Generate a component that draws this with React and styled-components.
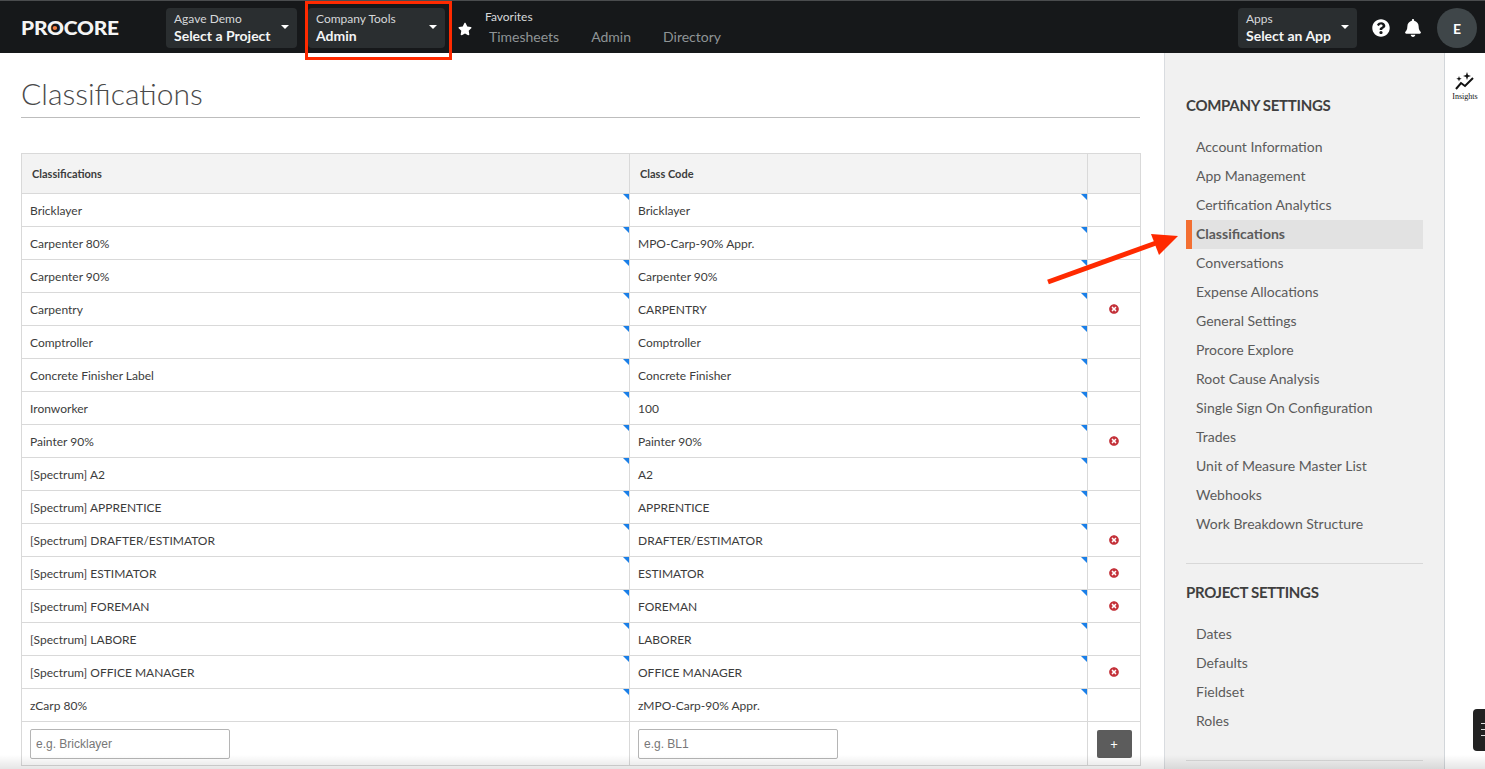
import React from "react";
import styled, { createGlobalStyle } from "styled-components";
import { FaBell, FaQuestionCircle, FaStar, FaTimesCircle } from "react-icons/fa";

const GlobalStyle = createGlobalStyle`
  html, body {
    margin: 0;
    height: 100%;
    overflow: hidden;
    background: #fff;
    font-family: Lato, "Liberation Sans", sans-serif;
  }
  * { box-sizing: border-box; }
`;

const Page = styled.div`
  position: relative;
  height: 769px;
  overflow: hidden;
  display: flex;
  flex-direction: column;
`;

const Header = styled.header`
  height: 53px;
  flex: none;
  display: flex;
  align-items: center;
  padding: 2px 8px 0 21px;
  background: #16181a;
  border-top: 1px solid #4a4c4e;
  color: #fff;
`;

const Logo = styled.div`
  width: 106px;
  margin-right: 39px;
  font-size: 18.5px;
  font-weight: 900;
  letter-spacing: -0.2px;
  line-height: 1;
  color: #f4f4f4;
  transform: scaleX(1.13);
  transform-origin: left center;
  white-space: nowrap;
`;

const LogoO = styled.span`
  position: relative;
  &::after {
    content: "";
    position: absolute;
    left: 50%;
    top: 50%;
    width: 4px;
    height: 4px;
    margin: -2px 0 0 -2px;
    border-radius: 50%;
    background: #f47e42;
  }
`;

const Picker = styled.div`
  position: relative;
  width: ${(p) => p.$width}px;
  height: 40px;
  margin-right: ${(p) => p.$gap || 0}px;
  padding: 3px 8px 0;
  border-radius: 4px;
  background: #2a2e30;
  flex: none;
  &::after {
    content: "";
    position: absolute;
    right: 8px;
    top: 17px;
    border-left: 4px solid transparent;
    border-right: 4px solid transparent;
    border-top: 4px solid #fff;
  }
`;

const PickerLabel = styled.div`
  font-size: 12px;
  line-height: 15px;
  color: #d6d8da;
`;

const PickerValue = styled.div`
  font-size: 14px;
  line-height: 19px;
  font-weight: 700;
  color: #f4f5f5;
`;

const StarWrap = styled.div`
  width: 40px;
  display: flex;
  justify-content: center;
  font-size: 14px;
  color: #fff;
  padding-top: 2px;
`;

const Favorites = styled.div`
  display: flex;
  flex-direction: column;
  margin-top: -2px;
`;

const FavLabel = styled.div`
  font-size: 12px;
  line-height: 15px;
  color: #d6d8da;
`;

const FavLinks = styled.nav`
  display: flex;
  gap: 32px;
  padding: 3px 0 0 4px;
`;

const FavLink = styled.span`
  font-size: 14px;
  line-height: 19px;
  color: #8f9496;
`;

const Spacer = styled.div`
  flex: 1;
`;

const IconButton = styled.div`
  width: 32px;
  display: flex;
  justify-content: center;
  font-size: 18px;
  color: #fff;
`;

const Avatar = styled.div`
  width: 40px;
  height: 40px;
  margin-left: 8px;
  border-radius: 50%;
  background: #3f4649;
  display: flex;
  align-items: center;
  justify-content: center;
  font-size: 14px;
  font-weight: 700;
  color: #fff;
`;

const Body = styled.div`
  flex: 1;
  display: flex;
  min-height: 0;
`;

const Main = styled.main`
  width: 1164px;
  flex: none;
  padding: 0 24px 0 21px;
`;

const Title = styled.h1`
  margin: 0 0 35px;
  height: 65px;
  padding-top: 21px;
  border-bottom: 1px solid #bdbdbd;
  font-size: 30px;
  line-height: 38px;
  font-weight: 300;
  color: #4a4a4a;
`;

const Table = styled.table`
  width: 1119px;
  border-collapse: collapse;
  table-layout: fixed;
  font-size: 12px;
  color: #3c3c3c;
`;

const HeadCell = styled.th`
  height: 40px;
  padding: 0 10px;
  border: 1px solid #d9d9d9;
  background: #f3f3f3;
  text-align: left;
  font-size: 11px;
  font-weight: 700;
  color: #3c3c3c;
`;

const Cell = styled.td`
  position: relative;
  height: 33px;
  padding: 0 8px;
  border: 1px solid #d9d9d9;
  white-space: nowrap;
  ${(p) =>
    p.$flag &&
    `&::after {
      content: "";
      position: absolute;
      top: 0;
      right: 0;
      border-top: 6px solid #1a7fe8;
      border-left: 6px solid transparent;
    }`}
`;

const ActionCell = styled.td`
  height: 33px;
  border: 1px solid #d9d9d9;
  text-align: center;
  vertical-align: middle;
  font-size: 10px;
  color: #c4323a;
  line-height: 0;
`;

const InputCell = styled.td`
  height: 44px;
  padding: 0 8px;
  border: 1px solid #d9d9d9;
`;

const Input = styled.input`
  display: block;
  width: 200px;
  height: 30px;
  padding: 0 5px;
  border: 1px solid #b5b5b5;
  border-radius: 2px;
  font-family: "Liberation Sans", Arial, sans-serif;
  font-size: 12px;
  background: #fff;
  &::placeholder {
    color: #777;
    opacity: 1;
  }
`;

const AddButton = styled.button`
  display: block;
  width: 35px;
  height: 28px;
  margin: 0 auto;
  border: none;
  border-radius: 2px;
  background: #5c5c5c;
  color: #fff;
  font-size: 13px;
  font-family: Lato, sans-serif;
  padding: 0;
`;

const Sidebar = styled.aside`
  width: 281px;
  flex: none;
  padding: 0 21px 0 21px;
  background: #f1f1f1;
  border-left: 1px solid #d9dce0;
  border-right: 1px solid #d2d6da;
`;

const SideTitle = styled.h3`
  margin: 0;
  padding-top: ${(p) => p.$top}px;
  font-size: 15px;
  line-height: 20px;
  font-weight: 700;
  letter-spacing: -0.3px;
  color: #3f3f3f;
`;

const SideList = styled.ul`
  list-style: none;
  margin: 18px 0 0;
  padding: 0;
`;

const SideItem = styled.li`
  height: 29px;
  margin-bottom: 0;
  padding-left: ${(p) => (p.$active ? 4 : 10)}px;
  border-left: ${(p) => (p.$active ? "6px solid #f36f32" : "none")};
  background: ${(p) => (p.$active ? "#e2e2e2" : "transparent")};
  font-size: 14px;
  line-height: 28px;
  font-weight: ${(p) => (p.$active ? 700 : 400)};
  color: #5b5b5b;
`;

const SideDivider = styled.hr`
  margin: 24px 0 0;
  border: none;
  border-top: 1px solid #d8d8d8;
`;

const InsightsRail = styled.div`
  flex: 1;
  display: flex;
  flex-direction: column;
  align-items: center;
  padding-top: 17px;
  font-family: "Liberation Serif", serif;
  font-size: 8px;
  line-height: 10px;
  color: #111;
  overflow: hidden;
`;

const InsightsIcon = styled.svg`
  width: 22px;
  height: 22px;
  display: block;
  margin-bottom: 0;
`;

const Annotations = styled.svg`
  position: absolute;
  inset: 0;
  width: 1485px;
  height: 769px;
  pointer-events: none;
`;

const DarkTab = styled.div`
  position: absolute;
  right: 0;
  top: 709px;
  width: 12px;
  height: 42px;
  border-radius: 4px 0 0 4px;
  background: #222;
`;

const TabLine = styled.div`
  position: absolute;
  right: 0;
  top: ${(p) => p.$top}px;
  width: 4px;
  height: 1px;
  background: #ddd;
`;

const BottomFade = styled.div`
  position: absolute;
  left: 0;
  right: 0;
  bottom: 0;
  height: 14px;
  background: linear-gradient(to bottom, rgba(0, 0, 0, 0), rgba(0, 0, 0, 0.1));
  pointer-events: none;
`;

const rows = [
  ["Bricklayer", "Bricklayer", false],
  ["Carpenter 80%", "MPO-Carp-90% Appr.", false],
  ["Carpenter 90%", "Carpenter 90%", false],
  ["Carpentry", "CARPENTRY", true],
  ["Comptroller", "Comptroller", false],
  ["Concrete Finisher Label", "Concrete Finisher", false],
  ["Ironworker", "100", false],
  ["Painter 90%", "Painter 90%", true],
  ["[Spectrum] A2", "A2", false],
  ["[Spectrum] APPRENTICE", "APPRENTICE", false],
  ["[Spectrum] DRAFTER/ESTIMATOR", "DRAFTER/ESTIMATOR", true],
  ["[Spectrum] ESTIMATOR", "ESTIMATOR", true],
  ["[Spectrum] FOREMAN", "FOREMAN", true],
  ["[Spectrum] LABORE", "LABORER", false],
  ["[Spectrum] OFFICE MANAGER", "OFFICE MANAGER", true],
  ["zCarp 80%", "zMPO-Carp-90% Appr.", false],
];

const companySettings = [
  "Account Information",
  "App Management",
  "Certification Analytics",
  "Classifications",
  "Conversations",
  "Expense Allocations",
  "General Settings",
  "Procore Explore",
  "Root Cause Analysis",
  "Single Sign On Configuration",
  "Trades",
  "Unit of Measure Master List",
  "Webhooks",
  "Work Breakdown Structure",
];

const projectSettings = ["Dates", "Defaults", "Fieldset", "Roles"];

const App = () => {
  return (
    <Page>
      <GlobalStyle />
      <Header>
        <Logo>
          PR<LogoO>O</LogoO>CORE
        </Logo>
        <Picker $width={131} $gap={11}>
          <PickerLabel>Agave Demo</PickerLabel>
          <PickerValue>Select a Project</PickerValue>
        </Picker>
        <Picker $width={137}>
          <PickerLabel>Company Tools</PickerLabel>
          <PickerValue>Admin</PickerValue>
        </Picker>
        <StarWrap>
          <FaStar />
        </StarWrap>
        <Favorites>
          <FavLabel>Favorites</FavLabel>
          <FavLinks>
            <FavLink>Timesheets</FavLink>
            <FavLink>Admin</FavLink>
            <FavLink>Directory</FavLink>
          </FavLinks>
        </Favorites>
        <Spacer />
        <Picker $width={119} $gap={8}>
          <PickerLabel>Apps</PickerLabel>
          <PickerValue>Select an App</PickerValue>
        </Picker>
        <IconButton>
          <FaQuestionCircle />
        </IconButton>
        <IconButton>
          <FaBell />
        </IconButton>
        <Avatar>E</Avatar>
      </Header>
      <Body>
        <Main>
          <Title>Classifications</Title>
          <Table>
            <colgroup>
              <col style={{ width: 608 }} />
              <col style={{ width: 458 }} />
              <col style={{ width: 53 }} />
            </colgroup>
            <thead>
              <tr>
                <HeadCell>Classifications</HeadCell>
                <HeadCell>Class Code</HeadCell>
                <HeadCell />
              </tr>
            </thead>
            <tbody>
              {rows.map(([name, code, canDelete]) => (
                <tr key={name}>
                  <Cell $flag>{name}</Cell>
                  <Cell $flag>{code}</Cell>
                  <ActionCell>{canDelete && <FaTimesCircle />}</ActionCell>
                </tr>
              ))}
              <tr>
                <InputCell>
                  <Input placeholder="e.g. Bricklayer" />
                </InputCell>
                <InputCell>
                  <Input placeholder="e.g. BL1" />
                </InputCell>
                <InputCell>
                  <AddButton>+</AddButton>
                </InputCell>
              </tr>
            </tbody>
          </Table>
        </Main>
        <Sidebar>
          <SideTitle $top={42}>COMPANY SETTINGS</SideTitle>
          <SideList>
            {companySettings.map((item) => (
              <SideItem key={item} $active={item === "Classifications"}>
                {item}
              </SideItem>
            ))}
          </SideList>
          <SideDivider />
          <SideTitle $top={18}>PROJECT SETTINGS</SideTitle>
          <SideList>
            {projectSettings.map((item) => (
              <SideItem key={item}>{item}</SideItem>
            ))}
          </SideList>
          <SideDivider />
        </Sidebar>
        <InsightsRail>
          <InsightsIcon viewBox="0 0 22 22" fill="none" stroke="#111" strokeWidth="2">
            <path d="M2 19l5-6 4 3 8-8" />
            <path d="M13 2l1 3 3 1-3 1-1 3-1-3-3-1 3-1z" fill="#111" stroke="none" />
            <path d="M5 6l.7 2 2 .7-2 .7L5 11.500l-.7-2-2-.7 2-.7z" fill="#111" stroke="none" />
          </InsightsIcon>
          Insights
        </InsightsRail>
      </Body>
      <DarkTab>
        <TabLine $top={14} />
        <TabLine $top={20} />
        <TabLine $top={26} />
      </DarkTab>
      <BottomFade />
      <Annotations viewBox="0 0 1485 769">
        <rect x="306.500" y="2.500" width="144" height="56" fill="none" stroke="#ff2a00" strokeWidth="3" />
        <path d="M1048 282L1156 243" stroke="#ff2a00" strokeWidth="5" fill="none" />
        <path d="M1178 236L1151 234L1159 255Z" fill="#ff2a00" />
      </Annotations>
    </Page>
  );
};

export default App;
